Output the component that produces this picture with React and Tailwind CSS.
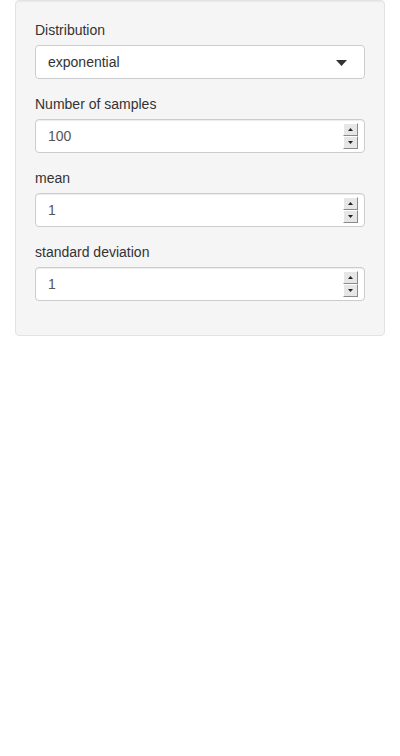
import React from "react";

function Spinner() {
  return (
    <div className="absolute right-[6px] top-[3px] flex flex-col w-[15px]">
      <div className="h-[13px] bg-[#e6e6e6] border border-t-white border-l-white border-r-[#8a8a8a] border-b-[#8a8a8a] flex items-center justify-center">
        <svg width="5" height="3" viewBox="0 0 5 3"><path d="M2.5 0 L5 3 L0 3 Z" fill="#222" /></svg>
      </div>
      <div className="h-[13px] bg-[#e6e6e6] border border-t-white border-l-white border-r-[#8a8a8a] border-b-[#8a8a8a] flex items-center justify-center">
        <svg width="5" height="3" viewBox="0 0 5 3"><path d="M0 0 L5 0 L2.5 3 Z" fill="#222" /></svg>
      </div>
    </div>
  );
}

function NumberField({ label, value }) {
  return (
    <div className="mb-[15px]">
      <div className="text-[14px] leading-[20px] mb-[5px] text-[#333]">{label}</div>
      <div className="relative h-[34px] bg-white border border-[#ccc] rounded-[4px] shadow-[inset_0_1px_1px_rgba(0,0,0,0.075)] flex items-center px-[12px] text-[14px] text-[#555]">
        {value}
        <Spinner />
      </div>
    </div>
  );
}

export default function App() {
  return (
    <div className="bg-white min-h-[756px] px-[15px] pt-0" style={{ fontFamily: '"Liberation Sans", Arial, sans-serif' }}>
      <div className="bg-[#f5f5f5] border border-[#e3e3e3] rounded-[4px] p-[19px] shadow-[inset_0_1px_1px_rgba(0,0,0,0.05)]">
        <div className="mb-[15px]">
          <div className="text-[14px] leading-[20px] mb-[5px] text-[#333]">Distribution</div>
          <div className="relative h-[34px] bg-white border border-[#ccc] rounded-[4px] flex items-center px-[12px] text-[14px] text-[#333]">
            exponential
            <svg className="absolute right-[17px] top-[14px]" width="11" height="6" viewBox="0 0 11 6"><path d="M0 0 L11 0 L5.5 6 Z" fill="#333" /></svg>
          </div>
        </div>
        <NumberField label="Number of samples" value="100" />
        <NumberField label="mean" value="1" />
        <NumberField label="standard deviation" value="1" />
      </div>
    </div>
  );
}
